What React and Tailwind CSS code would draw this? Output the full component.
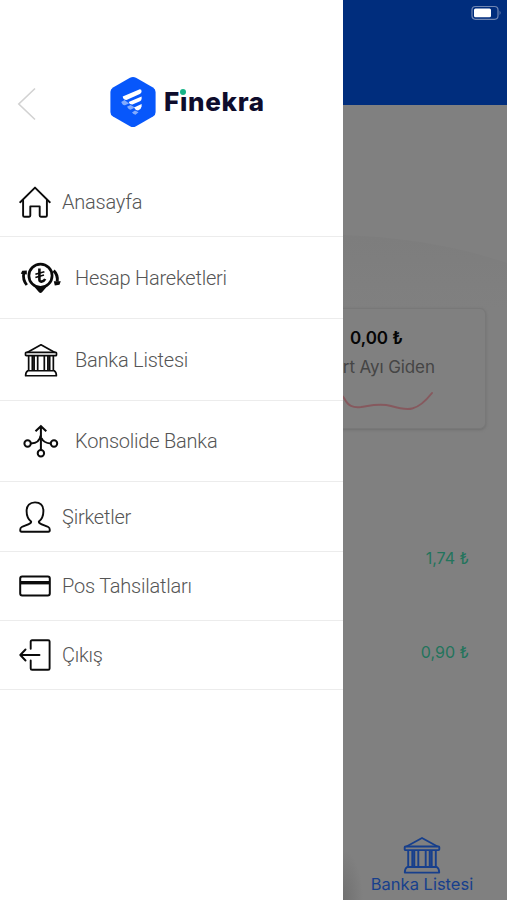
import React from 'react'

function HomeIcon() {
  return (
    <svg width="32" height="32" viewBox="0 0 32 32" fill="none" stroke="#0b0b0b" strokeWidth="1.9" strokeLinecap="round" strokeLinejoin="round">
      <path d="M1.2 16.2 L16 1.6 L30.8 16.2" />
      <path d="M4.1 14.4 V29.4 Q4.1 30.8 5.5 30.8 H10.2 Q11.3 30.8 11.3 29.6 V20.4 H20.7 V29.6 Q20.7 30.8 21.8 30.8 H26.5 Q27.9 30.8 27.9 29.4 V14.4" />
    </svg>
  )
}

function LiraPinIcon() {
  return (
    <svg width="42" height="32" viewBox="0 0 42 32" fill="none" stroke="#0b0b0b">
      <circle cx="20.5" cy="13.7" r="11.6" strokeWidth="2.7" />
      <path d="M11 21 Q20.5 28 30 21 L22 30.2 Q20.5 31.7 19 30.2 Z" fill="#0b0b0b" stroke="none" />
      <path d="M19.4 6.5 V17.6 Q19.4 19.8 21.4 19.6 Q24 19.4 25.2 17" strokeWidth="2.6" />
      <path d="M15.4 12.3 L24.4 9.7 M15.4 15.5 L24 13" strokeWidth="1.7" />
      <path d="M6.8 23 Q2.4 17.500 3.800 11" strokeWidth="2.8" />
      <path d="M.8 11.8 L2.200 8.800 L6.800 8.400 V12.600 Z" fill="#0b0b0b" stroke="none" />
      <path d="M33.6 8.6 Q38.2 13 37.2 19.500" strokeWidth="3" />
      <path d="M33.800 19.300 L40.800 19.300 L39.500 22.800 L34.800 23.600 Z" fill="#0b0b0b" stroke="none" />
    </svg>
  )
}

function BankIcon({ className }) {
  return (
    <svg className={className} viewBox="0 0 38 38" fill="none" stroke="currentColor" strokeWidth="1.9" strokeLinejoin="round">
      <path d="M3.5 10.5 L19 2 L34.5 10.5" />
      <rect x="1.7" y="10.5" width="34.6" height="3.6" rx=".8" />
      <path d="M5.2 14 V31 M9.3 14 V31 M11.3 14 V31 M15.3 14 V31 M22.7 14 V31 M26.7 14 V31 M28.7 14 V31 M32.8 14 V31" />
      <path d="M4.2 31 H33.8 Q36.2 32.5 36.2 36.6 H1.8 Q1.8 32.5 4.2 31 Z" />
    </svg>
  )
}

function MergeIcon() {
  return (
    <svg width="36" height="34" viewBox="0 0 36 34" fill="none" stroke="#0b0b0b" strokeWidth="2">
      <circle cx="4.6" cy="19.5" r="3.2" />
      <circle cx="31" cy="19.5" r="3.2" />
      <circle cx="17.9" cy="29.2" r="3.2" />
      <path d="M17.9 26 V2.5 M12.5 7.3 L17.9 2.2 L23.3 7.3" />
      <path d="M7.8 19.5 Q16.8 19 17.6 11.5 M27.8 19.5 Q20.5 19 18.5 14" />
    </svg>
  )
}

function PersonIcon() {
  return (
    <svg width="32" height="32" viewBox="0 0 32 32" fill="none" stroke="#0b0b0b" strokeWidth="1.9" strokeLinejoin="round">
      <path d="M16 1.4 C10.8 1.4 7.6 4.5 7.6 10 C7.6 15 9.2 18.3 12.1 20.6 C12.6 22.2 10 22.9 2.7 26 C1.3 26.7 1.2 27.6 1.2 29 C1.2 30.3 1.8 30.7 2.6 30.7 H29.4 C30.2 30.7 30.8 30.3 30.8 29 C30.8 27.6 30.7 26.7 29.3 26 C22 22.9 19.4 22.2 19.9 20.6 C22.8 18.3 24.4 15 24.4 10 C24.4 4.5 21.2 1.4 16 1.4 Z" />
    </svg>
  )
}

function CardIcon() {
  return (
    <svg width="32" height="22" viewBox="0 0 32 22" fill="none" stroke="#0b0b0b">
      <rect x="1.2" y="1.5" width="29.6" height="18.9" rx="2" strokeWidth="2" />
      <path d="M1.5 7.7 H30.5" strokeWidth="3.4" />
    </svg>
  )
}

function ExitIcon() {
  return (
    <svg width="32" height="32" viewBox="0 0 32 32" fill="none" stroke="#0b0b0b" strokeWidth="1.9" strokeLinecap="round" strokeLinejoin="round">
      <path d="M11.7 9.8 V2.6 Q11.7 1.2 13.1 1.2 H29.2 Q30.6 1.2 30.6 2.6 V29.4 Q30.6 30.8 29.2 30.8 H13.1 Q11.7 30.8 11.7 29.4 V21.5" />
      <path d="M20.5 16 H1.8 M6.5 10.5 L1.3 16 L6.5 21.5" />
    </svg>
  )
}

function LogoMark() {
  return (
    <svg width="46" height="52" viewBox="0 0 46 52">
      <path d="M20 1.8 Q23 .1 26 1.8 L43 11.5 Q45.6 13 45.6 16 V36 Q45.6 39 43 40.5 L26 50.2 Q23 51.9 20 50.2 L3 40.5 Q.4 39 .4 36 V16 Q.4 13 3 11.5 Z" fill="#0757fb" />
      <g fill="#fff">
        <path d="M11.2 26 L14.5 24 L19 27.5 L15 29.3 Q13.5 29.5 12.5 28.3 Z M17 30.8 L20.5 29 L25 31.5 L20.5 33.7 Q18.500 33.500 17 30.800 Z M22 36.500 L25 34.500 L28.500 36.200 L25.500 38.800 Q23.500 38.500 22 36.500 Z" opacity=".5" />
        <path d="M12.7 20.4 L29.2 13.4 Q31.7 13 31.6 15.6 Q31.4 17.4 29.8 18 L16.5 24 Q13 23.5 12.7 20.4 Z" />
        <path d="M18.6 26 L31.6 20.4 V22.7 Q31.5 24.5 30 25.2 L22.5 28.5 Q19.5 28.7 18.6 26 Z" />
        <path d="M24 31.4 L31.6 28 V30.4 Q31.5 32.5 28 34.6 Q25.5 34.3 24 31.4 Z" />
      </g>
    </svg>
  )
}

function MenuItem({ icon, label, wide, className }) {
  return (
    <li className={`flex items-center border-b border-[#ececec] ${className}`}>
      <span className={`flex justify-center shrink-0 ${wide ? 'w-[81px]' : 'w-[69px]'}`}>{icon}</span>
      <span className={`text-[20px] leading-6 font-light tracking-[-0.22px] text-[#555] ${wide ? '-ml-[6px]' : '-ml-[7px]'}`}>{label}</span>
    </li>
  )
}

function Drawer() {
  return (
    <aside className="w-[343px] h-[900px] shrink-0 bg-white font-['Roboto',sans-serif]">
      <header className="h-[168px] flex items-start">
        <svg className="mt-[87px] ml-[17px]" width="20" height="34" viewBox="0 0 20 34" fill="none" stroke="#d2d2d2" strokeWidth="1.6">
          <path d="M18 1.5 L1.8 17 L18 32.5" />
        </svg>
        <div className="flex items-center mt-[76px] ml-[73px]">
          <LogoMark />
          <div className="relative ml-[8px] text-[26px] leading-8 font-extrabold tracking-[0.7px] text-[#0e0c2c] font-['Inter',sans-serif]">
            Fınekra
            <span className="absolute left-[16px] top-[3px] size-[6px] rounded-full bg-[#16b488]"></span>
          </div>
        </div>
      </header>

      <ul>
        <MenuItem className="h-[69px]" icon={<HomeIcon />} label="Anasayfa" />
        <MenuItem className="h-[82px]" icon={<LiraPinIcon />} label="Hesap Hareketleri" wide />
        <MenuItem className="h-[82px]" icon={<BankIcon className="w-[34px] h-[34px] text-[#0b0b0b]" />} label="Banka Listesi" wide />
        <MenuItem className="h-[81px]" icon={<MergeIcon />} label="Konsolide Banka" wide />
        <MenuItem className="h-[70px]" icon={<PersonIcon />} label="Şirketler" />
        <MenuItem className="h-[69px]" icon={<CardIcon />} label="Pos Tahsilatları" />
        <MenuItem className="h-[69px]" icon={<ExitIcon />} label="Çıkış" />
      </ul>
    </aside>
  )
}

function Dashboard() {
  return (
    <main className="flex-1 min-w-0 h-[900px] overflow-hidden flex flex-col bg-[#808080] font-['Inter',sans-serif]">
      <div className="h-[105px] shrink-0 bg-[#002d7d] flex justify-end items-start pt-[5px] pr-[5px]">
        <svg width="31" height="16" viewBox="0 0 31 16" fill="none">
          <rect x="1" y="1.5" width="26" height="12.8" rx="3.5" stroke="#7187b3" strokeWidth="1.2" />
          <rect x="3" y="3.5" width="17" height="8.8" rx="1.5" fill="#fff" />
          <path d="M28.6 5.5 Q30.5 7.8 28.6 10 Z" fill="#7187b3" />
        </svg>
      </div>

      {/* faint curve behind the cards */}
      <svg className="h-[203px] shrink-0" width="164" height="203" viewBox="0 0 164 203">
        <defs>
          <linearGradient id="curve" x1="0" y1="0" x2="0" y2="1">
            <stop offset="0" stopColor="#7d7d7d" />
            <stop offset="1" stopColor="#808080" />
          </linearGradient>
        </defs>
        <path d="M0 130 Q90 133 164 158 V203 H0 Z" fill="url(#curve)" />
      </svg>

      <div className="w-[219px] h-[121px] -ml-[76px] shrink-0 rounded-[6px] border border-[#787878] bg-[#808080] shadow-[0_1px_3px_#6e6e6e] flex flex-col items-center pt-[18px]">
        <div className="text-[17px] leading-[22px] font-semibold text-[#050505]">0,00 ₺</div>
        <div className="mt-[7px] text-[17px] leading-[22px] tracking-[-0.1px] text-[#454545]">Mart Ayı Giden</div>
        <svg className="mt-[11px]" width="116" height="28" viewBox="0 0 116 28" fill="none" stroke="#86595e" strokeWidth="2" strokeLinecap="round">
          <path d="M2 4 C10 -2 18 0 25 9 C29 17 34 19 42 18 C52 16.5 61 14 72 17 C89 22 98 23 113 4" />
        </svg>
      </div>

      <div className="mt-[118px] pr-[38px] text-right text-[16px] leading-[22px] text-[#23745c]">1,74 ₺</div>
      <div className="mt-[72px] pr-[38px] text-right text-[16px] leading-[22px] text-[#23745c]">0,90 ₺</div>

      <div className="flex-1 flex flex-col items-center justify-end pb-[5px] pr-[6px] text-[#173f8c] bg-[radial-gradient(ellipse_20px_50px_at_0_100%,#707070,transparent)]">
        <BankIcon className="w-[38px] h-[38px] -mb-[1px]" />
        <div className="text-[16.5px] leading-[22px] whitespace-nowrap">Banka Listesi</div>
      </div>
    </main>
  )
}

export default function App() {
  return (
    <div className="flex w-[507px] h-[900px] overflow-hidden bg-white">
      <Drawer />
      <Dashboard />
    </div>
  )
}
